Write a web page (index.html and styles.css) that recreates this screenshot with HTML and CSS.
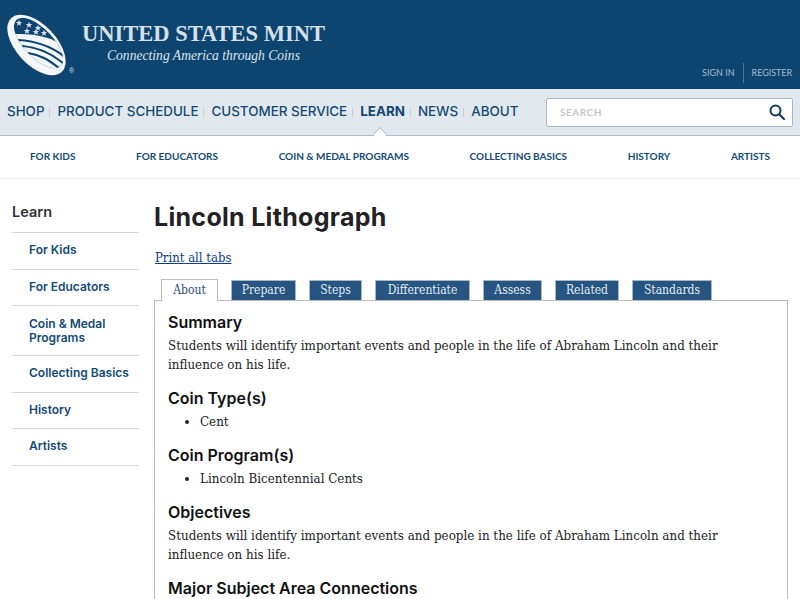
FILE: index.html
```html
<!DOCTYPE html>
<html lang="en">
<head>
<meta charset="utf-8">
<title>Lincoln Lithograph</title>
<link rel="stylesheet" href="styles.css">
</head>
<body>
<header class="masthead">
  <a class="brand" href="#">
    <svg class="coin" width="70" height="68" viewBox="7 13 70 68">
      <defs>
        <clipPath id="face"><ellipse cx="38.500" cy="43" rx="32" ry="14.500" transform="rotate(46 38.500 43)"/></clipPath>
        <path id="star" d="M0-3.200L.9-1 3.200-.9 1.400.5 2 2.800 0 1.500-2 2.800-1.400.5-3.200-.9-.9-1Z"/>
      </defs>
      <ellipse cx="36.500" cy="45" rx="37" ry="20" transform="rotate(47 36.500 45)" fill="#f4f7f9"/>
      <ellipse cx="38.500" cy="43" rx="32" ry="14.500" transform="rotate(46 38.500 43)" fill="#0e4470"/>
      <g clip-path="url(#face)">
        <path d="M14 34C30 34 48 35 62 45L72 80L30 66Z" fill="#f4f7f9"/>
        <path d="M18 40C34 41 52 46 66 58M22 46C36 47 50 52 64 64M28 53C40 55 48 59 60 69" fill="none" stroke="#0e4470" stroke-width="2.200"/>
      </g>
      <g fill="#d7e1e9">
        <use href="#star" x="19" y="23"/>
        <use href="#star" x="29" y="25"/>
        <use href="#star" x="38" y="28"/>
        <use href="#star" x="27" y="31"/>
        <use href="#star" x="36" y="32"/>
        <use href="#star" x="44" y="33"/>
      </g>
    </svg>
    <span class="reg">®</span>
    <span class="brand-text">
      <span class="brand-name">UNITED STATES MINT</span>
      <span class="brand-tag">Connecting America through Coins</span>
    </span>
  </a>
  <nav class="account">
    <a href="#">SIGN IN</a>
    <a href="#">REGISTER</a>
  </nav>
</header>

<div class="mainbar">
  <nav class="mainnav">
    <a href="#">SHOP</a>
    <a href="#">PRODUCT SCHEDULE</a>
    <a href="#">CUSTOMER SERVICE</a>
    <a href="#" class="current">LEARN</a>
    <a href="#">NEWS</a>
    <a href="#">ABOUT</a>
  </nav>
  <div class="search">
    <span class="search-label">SEARCH</span>
    <svg width="16" height="16" viewBox="0 0 16 16" fill="none" stroke="#0f3a5c" stroke-width="2"><circle cx="6.500" cy="6.500" r="5"/><path d="M10.200 10.200L15 15" stroke-linecap="round"/></svg>
  </div>
</div>

<nav class="subnav">
  <a href="#">FOR KIDS</a>
  <a href="#">FOR EDUCATORS</a>
  <a href="#">COIN &amp; MEDAL PROGRAMS</a>
  <a href="#">COLLECTING BASICS</a>
  <a href="#">HISTORY</a>
  <a href="#">ARTISTS</a>
</nav>

<div class="page">
  <aside class="side">
    <h2>Learn</h2>
    <ul>
      <li><a href="#">For Kids</a></li>
      <li><a href="#">For Educators</a></li>
      <li><a href="#">Coin &amp; Medal Programs</a></li>
      <li><a href="#">Collecting Basics</a></li>
      <li><a href="#">History</a></li>
      <li><a href="#">Artists</a></li>
    </ul>
  </aside>
  <main class="content">
    <h1>Lincoln Lithograph</h1>
    <a class="print" href="#">Print all tabs</a>
    <div class="tabs">
      <a href="#" class="tab active">About</a>
      <a href="#" class="tab">Prepare</a>
      <a href="#" class="tab">Steps</a>
      <a href="#" class="tab">Differentiate</a>
      <a href="#" class="tab">Assess</a>
      <a href="#" class="tab">Related</a>
      <a href="#" class="tab">Standards</a>
    </div>
    <section class="panel">
      <h3>Summary</h3>
      <p>Students will identify important events and people in the life of Abraham Lincoln and their influence on his life.</p>
      <h3>Coin Type(s)</h3>
      <ul><li>Cent</li></ul>
      <h3>Coin Program(s)</h3>
      <ul><li>Lincoln Bicentennial Cents</li></ul>
      <h3>Objectives</h3>
      <p>Students will identify important events and people in the life of Abraham Lincoln and their influence on his life.</p>
      <h3>Major Subject Area Connections</h3>
    </section>
  </main>
</div>
</body>
</html>
```

FILE: styles.css
```css
* { box-sizing: border-box; }
html, body { margin: 0; height: 599px; overflow: hidden; }
body { background: #fff; font-family: "DejaVu Serif Condensed", "DejaVu Serif", serif; font-stretch: condensed; color: #222; }
a { text-decoration: none; }

.masthead { height: 89px; background: #0e4470; display: flex; justify-content: space-between; padding: 13px 8px 0 7px; }
.brand { display: flex; align-items: flex-start; position: relative; }
.coin { display: block; }
.reg { position: absolute; left: 62px; top: 54px; font: 7px "Liberation Sans", sans-serif; color: #dfe7ee; }
.brand-text { display: flex; flex-direction: column; margin-left: 5px; }
.brand-name { font: 700 22.500px/1 "Liberation Serif", serif; color: #d5e0e9; margin-top: 10px; white-space: nowrap; }
.brand-tag { font: italic 13.600px/1 "Liberation Serif", serif; color: #dbe4ec; margin: 3px 0 0 25px; white-space: nowrap; }
.account { display: flex; align-items: center; align-self: flex-start; margin-top: 49px; font: 9px/20px Lato, sans-serif; }
.account a { color: #a3bccf; padding: 0 8px 0 0; height: 20px; margin-top: 1px; }
.account a:last-child { border-left: 1px solid #4e7796; padding: 0 0 0 8px; letter-spacing: -.05px; }

.mainbar { height: 47px; background: #e2e9ee; border-bottom: 1px solid #b4c0c9; display: flex; justify-content: space-between; align-items: center; padding: 0 7px; }
.mainnav { display: flex; align-items: center; font: 500 13.400px/1 Inter, sans-serif; }
.mainnav a { color: #134a75; padding-right: 6px; margin-right: 7px; position: relative; }
.mainnav a:not(:last-child) { background: linear-gradient(#c3ced6, #c3ced6) right center / 1px 9px no-repeat; }
.mainnav a.current { font-weight: 700; }
.mainnav a.current::after { content: ""; position: absolute; left: 15px; top: 24px; width: 9px; height: 9px; background: #fff; border-left: 1px solid #b4c0c9; border-top: 1px solid #b4c0c9; transform: rotate(45deg); }
.search { width: 247px; height: 29px; background: #fff; border: 1px solid #a9b7c2; border-radius: 2px; display: flex; justify-content: space-between; align-items: center; padding: 0 7px 0 13px; }
.search-label { font: 700 10px Lato, sans-serif; letter-spacing: .5px; color: #c1c9d0; }

.subnav { height: 43px; border-bottom: 1px solid #eef1f3; display: flex; justify-content: space-between; align-items: center; padding: 0 30px 2px; font: 700 10px/1 Lato, sans-serif; }
.subnav a { color: #134a75; }

.page { display: flex; }
.side { width: 127px; margin-left: 12px; flex: none; padding-top: 24px; }
.side h2 { margin: 0 0 12px; font: 600 14.500px/17px Inter, sans-serif; color: #333; }
.side ul { list-style: none; margin: 0; padding: 0; border-top: 1px solid #d3d7da; }
.side li { border-bottom: 1px solid #d3d7da; padding: 10px 0 12px 17px; }
.side li:nth-child(3) { padding: 11px 0 11px 17px; }
.side li a { display: block; font: 600 12px/13.500px Inter, sans-serif; color: #134a75; }

.content { margin-left: 15px; width: 634px; flex: none; padding-top: 24px; }
h1 { margin: 0 0 17px; font: 700 25px/29px Inter, sans-serif; letter-spacing: .3px; color: #222; }
.print { display: block; margin: 0 0 13px 1px; font-size: 13px; line-height: 17px; color: #0b3d91; text-decoration: underline; }
.tabs { display: grid; grid-template-columns: 57px 65px 53px 95px 59px 64px 80px; gap: 13px; align-items: end; padding-left: 7px; position: relative; z-index: 1; height: 21px; }
.tab { height: 20px; background: #255580; color: #e4ebf1; border: 1px solid #a9b7c2; border-bottom: 0; font-size: 12px; line-height: 19px; text-align: center; }
.tab.active { height: 22px; margin-bottom: -1px; background: #fff; color: #2a4d7c; border-color: #bbb; line-height: 20px; }
.panel { border: 1px solid #bbb; padding: 11px 30px 0 13px; height: 300px; overflow: hidden; }
.panel h3 { margin: 0; font: 600 16px/20px Inter, sans-serif; color: #111; }
.panel p { margin: 4px 0 14px; font-size: 13.250px; line-height: 19px; color: #222; }
.panel ul { margin: 4px 0 14px; padding-left: 32px; font-size: 13.250px; line-height: 19px; }
```
